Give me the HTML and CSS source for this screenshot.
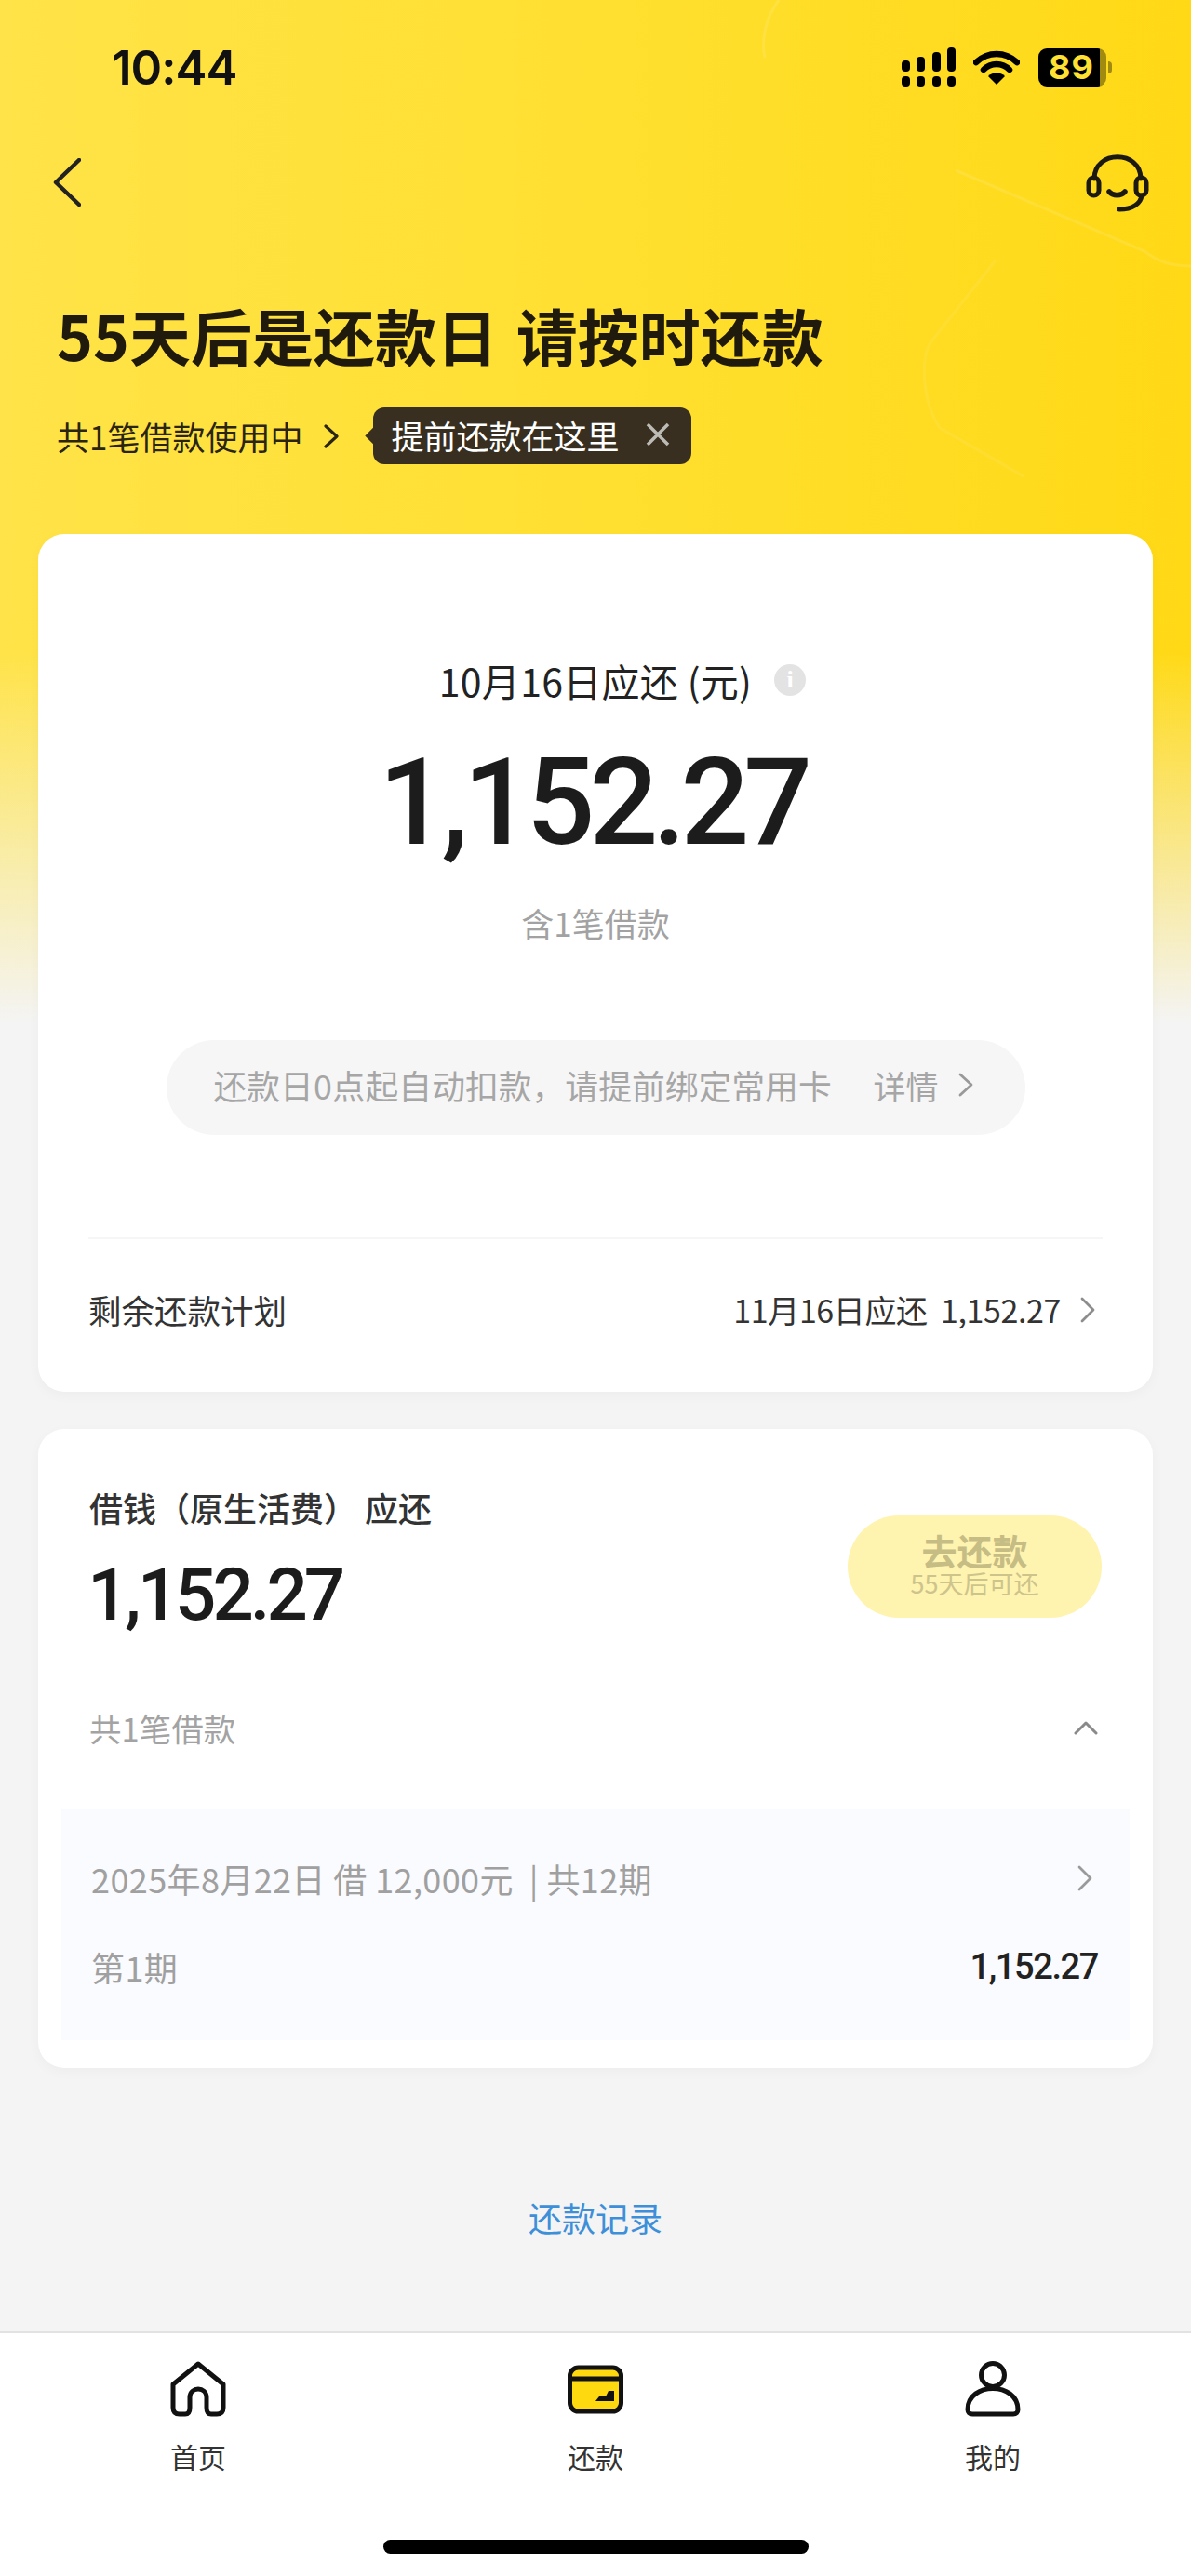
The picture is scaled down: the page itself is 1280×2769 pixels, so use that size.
FILE: index.html
```html
<!DOCTYPE html>
<html lang="zh-CN">
<head>
    <meta charset="UTF-8">
    <meta name="viewport" content="width=device-width, initial-scale=1.0">
    <title>还款</title>
    <link rel="stylesheet" href="styles.css">
</head>
<body>
    <div class="page">
        <svg class="decor" viewBox="0 0 520 580" fill="none" stroke="#ffffff" stroke-opacity="0.11" stroke-width="3">
            <path d="M77 0 C62 20 58 45 62 62"/>
            <path d="M267 183 L470 270 C485 282 500 286 520 286"/>
            <path d="M310 280 L240 368 C230 385 230 430 250 460 L340 512" stroke-opacity="0.08"/>
        </svg>

        <div class="status-bar">
            <span class="time">10:44</span>
            <div class="status-icons">
                <svg class="signal" width="58" height="42" viewBox="0 0 58 42" fill="#000">
                    <rect x="0" y="14" width="9" height="12" rx="4"/>
                    <rect x="16" y="10" width="9" height="16" rx="4"/>
                    <rect x="33" y="5" width="9" height="21" rx="4"/>
                    <rect x="49" y="0" width="9" height="26" rx="4"/>
                    <rect x="0" y="31" width="9" height="11" rx="4"/>
                    <rect x="16" y="31" width="9" height="11" rx="4"/>
                    <rect x="33" y="31" width="9" height="11" rx="4"/>
                    <rect x="49" y="31" width="9" height="11" rx="4"/>
                </svg>
                <svg class="wifi" width="50" height="37" viewBox="0 0 50 37" fill="none">
                    <path d="M3 13 C16 1 34 1 47 13" stroke="#000" stroke-width="6.5" stroke-linecap="round"/>
                    <path d="M11 21 C19 13 31 13 39 21" stroke="#000" stroke-width="6.5" stroke-linecap="round"/>
                    <path d="M25 37 L16 28 C21 23 29 23 34 28 Z" fill="#000"/>
                </svg>
                <div class="battery">
                    <div class="battery-body">
                        <span class="battery-num">89</span>
                    </div>
                    <div class="battery-nub"></div>
                </div>
            </div>
        </div>

        <div class="nav-bar">
            <svg width="30" height="52" viewBox="0 0 30 52" fill="none">
                <path d="M28 2 L3 26 L28 50" stroke="#222" stroke-width="4.5" stroke-linecap="round" stroke-linejoin="round"/>
            </svg>
            <svg width="68" height="63" viewBox="0 0 68 63" fill="none" stroke="#1c1a10" stroke-width="5" stroke-linecap="round">
                <path d="M9 27 C9 -4 59 -4 59 27"/>
                <rect x="3" y="26" width="11" height="19" rx="5.5"/>
                <rect x="54" y="26" width="11" height="19" rx="5.5"/>
                <path d="M25 41 C29 46 38 46 42 41" stroke-width="5.5"/>
                <path d="M60 45 C59 54 50 60 36 60"/>
            </svg>
        </div>

        <header class="hero">
            <h1>55天后是还款日 请按时还款</h1>
            <div class="hero-sub">
                <span>共1笔借款使用中</span>
                <svg class="hero-arrow" width="18" height="26" viewBox="0 0 18 26" fill="none">
                    <path d="M3 2 L15 13 L3 24" stroke="#2a2412" stroke-width="3.2" stroke-linecap="round" stroke-linejoin="round"/>
                </svg>
                <div class="tip">
                    <span>提前还款在这里</span>
                    <svg width="26" height="26" viewBox="0 0 26 26" fill="none">
                        <path d="M2 2 L24 24 M24 2 L2 24" stroke="#bdbbb5" stroke-width="3.5"/>
                    </svg>
                </div>
            </div>
        </header>

        <section class="card card-due">
            <div class="due-label">
                <span>10月16日应还 (元)</span>
                <span class="info-dot">i</span>
            </div>
            <div class="due-amount">1,152.27</div>
            <div class="due-count">含1笔借款</div>
            <div class="notice">
                <span>还款日0点起自动扣款，请提前绑定常用卡</span>
                <span class="notice-more">
                    <span>详情</span>
                    <svg width="16" height="26" viewBox="0 0 16 26" fill="none">
                        <path d="M2 2 L14 13 L2 24" stroke="#999" stroke-width="2.8" stroke-linecap="round" stroke-linejoin="round"/>
                    </svg>
                </span>
            </div>
            <div class="plan-row">
                <span>剩余还款计划</span>
                <span class="plan-right">
                    <span>11月16日应还&nbsp; 1,152.27</span>
                    <svg width="18" height="28" viewBox="0 0 18 28" fill="none">
                        <path d="M3 2 L15 14 L3 26" stroke="#8d8d8d" stroke-width="2.8" stroke-linecap="round" stroke-linejoin="round"/>
                    </svg>
                </span>
            </div>
        </section>

        <section class="card card-loan">
            <div class="loan-head">
                <div>
                    <div class="loan-title">借钱（原生活费） 应还</div>
                    <div class="loan-amount">1,152.27</div>
                </div>
                <div class="pay-btn">
                    <span class="pay-main">去还款</span>
                    <span class="pay-sub">55天后可还</span>
                </div>
            </div>
            <div class="loan-toggle">
                <span>共1笔借款</span>
                <svg width="26" height="16" viewBox="0 0 26 16" fill="none">
                    <path d="M2 14 L13 3 L24 14" stroke="#8a8a8a" stroke-width="3" stroke-linecap="round" stroke-linejoin="round"/>
                </svg>
            </div>
            <div class="loan-panel">
                <div class="panel-row panel-row-top">
                    <span>2025年8月22日 借 12,000元 &nbsp;| 共12期</span>
                    <svg width="18" height="28" viewBox="0 0 18 28" fill="none">
                        <path d="M3 2 L15 14 L3 26" stroke="#9a9a9a" stroke-width="2.8" stroke-linecap="round" stroke-linejoin="round"/>
                    </svg>
                </div>
                <div class="panel-row">
                    <span>第1期</span>
                    <span class="panel-amount">1,152.27</span>
                </div>
            </div>
        </section>

        <a class="history-link">还款记录</a>

        <nav class="tab-bar">
            <div class="tab">
                <svg width="60" height="60" viewBox="0 0 60 60" fill="none" stroke="#111" stroke-width="5" stroke-linejoin="round">
                    <path d="M3 25 L30 3 L57 25 L57 50 C57 55 54 57 50 57 L44 57 C40 57 39 54 39 50 L39 39 C39 27 21 27 21 39 L21 50 C21 54 20 57 16 57 L10 57 C6 57 3 55 3 50 Z" stroke-linecap="round"/>
                </svg>
                <span>首页</span>
            </div>
            <div class="tab">
                <svg width="60" height="60" viewBox="0 0 60 60" fill="none">
                    <rect x="2.5" y="7" width="55" height="47" rx="9" fill="#ffd90f" stroke="#111" stroke-width="5"/>
                    <path d="M3 19 H57" stroke="#111" stroke-width="5"/>
                    <path d="M30 43 H50 V32 H44 L41 38 H34 Z" fill="#111"/>
                </svg>
                <span>还款</span>
            </div>
            <div class="tab">
                <svg width="60" height="60" viewBox="0 0 60 60" fill="none" stroke="#111" stroke-width="5">
                    <circle cx="30" cy="15" r="12.5"/>
                    <path d="M3 52 C3 22 57 22 57 52 C57 55 55 57 52 57 H8 C5 57 3 55 3 52 Z"/>
                </svg>
                <span>我的</span>
            </div>
        </nav>
        <div class="home-bar"></div>
    </div>
</body>
</html>
```

FILE: styles.css
```css
* {
    box-sizing: border-box;
}

body {
    margin: 0;
    padding: 0;
    font-family: "Noto Sans CJK SC", "Roboto", sans-serif;
    background-color: #f4f4f4;
}

.page {
    position: relative;
    width: 1280px;
    height: 2769px;
    overflow: hidden;
    display: flex;
    flex-direction: column;
    background:
        linear-gradient(180deg, rgba(244, 244, 244, 0) 700px, rgba(244, 244, 244, 0.5) 900px, #f4f4f4 1100px),
        linear-gradient(90deg, #ffe348 0%, #ffdf2e 55%, #ffd916 100%);
}

.decor {
    position: absolute;
    top: 0;
    right: 0;
    width: 520px;
    height: 580px;
}

.status-bar {
    display: flex;
    justify-content: space-between;
    align-items: center;
    height: 64px;
    margin-top: 40px;
    padding: 0 85px 0 120px;
}

.time {
    font-family: "Inter", sans-serif;
    font-size: 51px;
    font-weight: 600;
    letter-spacing: -1px;
    color: #111;
}

.status-icons {
    display: flex;
    align-items: center;
}

.wifi {
    margin-left: 19px;
}

.battery {
    display: flex;
    align-items: center;
    margin-left: 20px;
}

.battery-body {
    width: 73px;
    height: 41px;
    border-radius: 9px;
    display: flex;
    align-items: center;
    padding-left: 11px;
    background: linear-gradient(90deg, #000 90%, #a08a10 90%);
}

.battery-num {
    font-family: "Inter", sans-serif;
    font-size: 36px;
    font-weight: 700;
    letter-spacing: 1px;
    color: #ffe033;
}

.battery-nub {
    width: 4px;
    height: 13px;
    margin-left: 2px;
    border-radius: 0 6px 6px 0;
    background-color: #a08a10;
}

.nav-bar {
    display: flex;
    justify-content: space-between;
    align-items: center;
    height: 64px;
    margin-top: 60px;
    padding: 0 45px 0 57px;
}

.hero {
    padding: 0 61px;
}

h1 {
    margin: 89px 0 0;
    font-size: 66px;
    line-height: 84px;
    font-weight: 700;
    word-spacing: 5px;
    color: #1f1a0c;
    white-space: nowrap;
}

.hero-sub {
    display: flex;
    align-items: center;
    height: 61px;
    margin-top: 37px;
    font-size: 35px;
    color: #2a2412;
}

.hero-arrow {
    margin-left: 22px;
}

.tip {
    position: relative;
    display: flex;
    align-items: center;
    gap: 29px;
    height: 61px;
    margin-left: 36px;
    padding: 0 23px 3px 19px;
    border-radius: 12px;
    background-color: #382f20;
    color: #fff;
}

.tip::before {
    content: "";
    position: absolute;
    left: -6px;
    top: 24px;
    width: 13px;
    height: 13px;
    background-color: #382f20;
    transform: rotate(45deg);
}

.card {
    margin: 0 41px;
    background-color: #fff;
    border-radius: 28px;
    box-shadow: 0 4px 14px rgba(0, 0, 0, 0.03);
}

.card-due {
    height: 922px;
    margin-top: 75px;
    padding: 0 54px;
    display: flex;
    flex-direction: column;
    align-items: center;
}

.due-label {
    position: relative;
    height: 60px;
    margin-top: 127px;
    font-size: 41px;
    line-height: 60px;
    letter-spacing: 0.3px;
    color: #222;
}

.info-dot {
    position: absolute;
    left: 100%;
    top: 13px;
    width: 34px;
    height: 34px;
    margin-left: 24px;
    border-radius: 50%;
    background-color: #e3e3e3;
    color: #fff;
    font-family: "Liberation Serif", serif;
    font-size: 26px;
    font-weight: 700;
    line-height: 34px;
    text-align: center;
}

.due-amount {
    margin-top: 27px;
    margin-left: -6px;
    height: 150px;
    font-family: "Roboto", sans-serif;
    font-size: 130px;
    font-weight: 500;
    line-height: 150px;
    letter-spacing: -6px;
    color: #1c1c1c;
}

.due-count {
    margin-top: 29px;
    height: 50px;
    font-size: 35px;
    line-height: 50px;
    color: #a2a2a2;
}

.notice {
    display: flex;
    align-items: center;
    justify-content: space-between;
    width: 923px;
    height: 102px;
    margin-top: 101px;
    padding: 0 56px 6px 51px;
    border-radius: 51px;
    background-color: #f6f6f6;
    font-size: 35.8px;
    color: #a6a6a6;
}

.notice-more {
    display: flex;
    align-items: center;
    gap: 21px;
    font-size: 35px;
}

.plan-row {
    display: flex;
    align-items: center;
    justify-content: space-between;
    align-self: stretch;
    height: 165px;
    margin-top: 110px;
    padding: 0 7px 12px 0;
    border-top: 2px solid #f6f6f6;
    font-size: 35.5px;
    color: #333;
}

.plan-right {
    display: flex;
    align-items: center;
    gap: 20px;
    font-size: 34px;
    letter-spacing: -0.4px;
}

.card-loan {
    height: 687px;
    margin-top: 40px;
    padding: 0 25px;
    display: flex;
    flex-direction: column;
}

.loan-head {
    display: flex;
    justify-content: space-between;
    padding: 59px 30px 0 30px;
}

.loan-title {
    font-size: 36px;
    line-height: 50px;
    font-weight: 500;
    color: #333;
}

.loan-amount {
    margin-top: 24px;
    margin-left: -2px;
    font-family: "Roboto", sans-serif;
    font-size: 78px;
    font-weight: 500;
    line-height: 92px;
    letter-spacing: -4px;
    color: #1c1c1c;
}

.pay-btn {
    display: flex;
    flex-direction: column;
    align-items: center;
    justify-content: center;
    width: 273px;
    height: 110px;
    margin-top: 34px;
    padding-bottom: 6px;
    border-radius: 55px;
    background-color: #fff3b0;
}

.pay-main {
    font-size: 38px;
    line-height: 42px;
    font-weight: 700;
    color: #c6bd85;
}

.pay-sub {
    font-size: 27px;
    line-height: 30px;
    color: #cdc48c;
}

.loan-toggle {
    display: flex;
    align-items: center;
    justify-content: space-between;
    height: 60px;
    margin-top: 66px;
    padding: 0 34px 0 30px;
    font-size: 34.5px;
    color: #a3a3a3;
}

.loan-panel {
    display: flex;
    flex-direction: column;
    height: 249px;
    margin-top: 57px;
    padding: 0 39px 0 32px;
    background-color: #fafbfe;
}

.panel-row {
    display: flex;
    align-items: center;
    justify-content: space-between;
    height: 50px;
    font-size: 36px;
    letter-spacing: 0.4px;
    color: #a0a0a0;
}

.panel-row-top {
    margin-top: 50px;
    margin-bottom: 45px;
}

.panel-amount {
    margin-right: -5px;
    font-family: "Roboto", sans-serif;
    font-size: 38px;
    font-weight: 500;
    letter-spacing: -1.4px;
    color: #222;
}

.history-link {
    margin-top: 130px;
    height: 60px;
    text-align: center;
    font-size: 36px;
    line-height: 60px;
    color: #3d8fd9;
}

.tab-bar {
    position: absolute;
    left: 0;
    right: 0;
    bottom: 0;
    height: 263px;
    display: flex;
    justify-content: space-between;
    padding: 30px 183px 0;
    border-top: 2px solid #e2e2e2;
    background-color: #fff;
}

.tab {
    display: flex;
    flex-direction: column;
    align-items: center;
    gap: 22px;
    width: 60px;
    font-size: 30px;
    line-height: 40px;
    color: #333;
}

.home-bar {
    position: absolute;
    left: 412px;
    top: 2730px;
    width: 457px;
    height: 15px;
    border-radius: 8px;
    background-color: #000;
}
```
